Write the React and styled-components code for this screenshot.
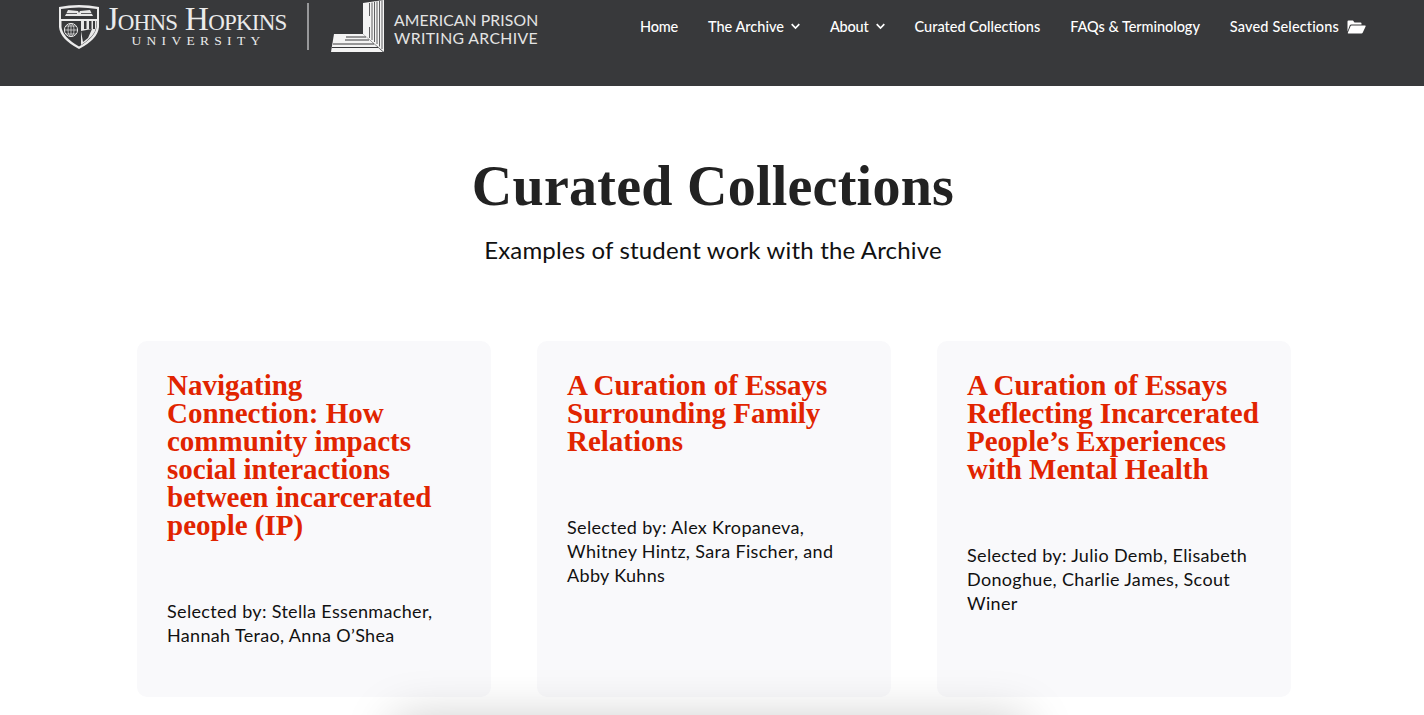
import React from "react";
import styled, { createGlobalStyle } from "styled-components";

const Global = createGlobalStyle`
  html, body { margin: 0; padding: 0; height: 715px; overflow: hidden; background: #fff; }
  body { font-family: "Lato", "Liberation Sans", sans-serif; color: #111; }
`;

const Page = styled.div`
  width: 1424px;
  height: 715px;
  overflow: hidden;
  position: relative;
`;

const Header = styled.header`
  height: 86px;
  box-sizing: border-box;
  background: #38393b;
  display: flex;
  justify-content: space-between;
  align-items: flex-start;
  padding: 0 58px;
`;

const Brand = styled.div`
  display: flex;
  align-items: flex-start;
  height: 54px;
`;

const Hopkins = styled.div`
  display: flex;
  align-items: flex-start;
  padding-top: 4px;
  gap: 5px;
`;

const HopkinsWords = styled.div`
  display: flex;
  flex-direction: column;
  align-items: center;
  color: #eaeaea;
  font-family: "Liberation Serif", serif;
  width: 182px;
`;

const HopkinsName = styled.span`
  font-size: 33.5px;
  line-height: 30px;
  font-variant: small-caps;
  white-space: nowrap;
  letter-spacing: -0.8px;
`;

const HopkinsSub = styled.span`
  font-size: 13.5px;
  line-height: 14px;
  letter-spacing: 5.3px;
  margin-right: -5px;
`;

const Divider = styled.div`
  width: 2px;
  height: 47px;
  margin: 3px 22px 0 20px;
  background: #97989a;
`;

const Archive = styled.div`
  display: flex;
  align-items: flex-start;
  gap: 9px;
`;

const ArchiveWords = styled.div`
  margin-top: 11px;
  display: flex;
  flex-direction: column;
`;

const ArchiveLine = styled.span`
  color: #e4e4e4;
  font-family: "Lato", sans-serif;
  font-size: 15.75px;
  line-height: 18px;
  white-space: nowrap;
  letter-spacing: ${(p) => p.$tracking}px;
`;

const Nav = styled.nav`
  display: flex;
  align-items: center;
  gap: 30px;
  height: 53px;
`;

const NavItem = styled.a`
  display: flex;
  align-items: center;
  gap: ${(p) => p.$gap || 7}px;
  color: #fff;
  font-family: "Lato", sans-serif;
  font-size: 14.5px;
  font-weight: 500;
  white-space: nowrap;
  letter-spacing: ${(p) => p.$tracking || 0}px;
`;

const Main = styled.main`
  display: flex;
  flex-direction: column;
  align-items: center;
  padding-left: 2px;
`;

const Title = styled.h1`
  margin: 69px 0 0;
  font-family: "Liberation Serif", serif;
  font-size: 56px;
  line-height: 62px;
  font-weight: 700;
  color: #222;
  letter-spacing: 0.25px;
`;

const Subtitle = styled.p`
  margin: 18px 0 0;
  font-family: "Lato", sans-serif;
  font-size: 24px;
  line-height: 30px;
  color: #111;
  letter-spacing: 0.17px;
`;

const Cards = styled.section`
  display: grid;
  grid-template-columns: repeat(3, 354px);
  column-gap: 46px;
  margin: 76px 0 0 2px;
`;

const Card = styled.article`
  height: 356px;
  box-sizing: border-box;
  background: #f9f9fb;
  border-radius: 10px;
  padding: 30px;
`;

const CardTitle = styled.h2`
  margin: 0 0 60px;
  font-family: "Liberation Serif", serif;
  font-size: 29px;
  line-height: 28px;
  font-weight: 700;
  color: #e12400;
`;

const Selected = styled.p`
  margin: 0;
  font-family: "Lato", sans-serif;
  font-size: 18px;
  line-height: 24px;
  color: #111;
  letter-spacing: 0.33px;
`;

const BottomShadow = styled.div`
  position: absolute;
  left: 405px;
  width: 610px;
  top: 730px;
  height: 60px;
  background: #888;
  box-shadow: 0 0 50px 10px rgba(0, 0, 0, 0.22);
`;

const Shield = () => (
  <svg width="42" height="45" viewBox="0 0 42 45" aria-hidden="true">
    <path d="M1 3 Q21 -1 41 3 L41 23 Q40 35 21 45 Q2 35 1 23 Z" fill="#ececec" />
    <path d="M3 5 Q21 2 39 5 L39 15 L3 15 Z" fill="#38393b" />
    <path d="M7 12 L10 6 L20 7 L21 9 L22 7 L32 6 L35 12 Z" fill="#e8e8e8" />
    <path d="M8 9.5 H19 M23 9.5 H34" stroke="#38393b" strokeWidth="0.8" />
    <path d="M3.5 17 L38.5 17 L38.5 23 Q37.5 33 21 42.5 Q4.5 33 3.5 23 Z" fill="#38393b" />
    <circle cx="13" cy="26" r="6.6" fill="none" stroke="#e8e8e8" strokeWidth="1" />
    <path d="M6.5 26 H19.5 M13 19.5 V32.5 M8 22 H18 M8 30 H18" stroke="#e8e8e8" strokeWidth="0.7" />
    <ellipse cx="13" cy="26" rx="3" ry="6.6" fill="none" stroke="#e8e8e8" strokeWidth="0.7" />
    <path d="M23 17 H38 V24 Q37 32 23 41 Z" fill="#e8e8e8" />
    <path d="M26 17 H28.5 V25 H26 Z M31 17 H33.5 V25 H31 Z M35 17 H37 V25 H35 Z M23 27 L34 25 L30 34 L25 38 Z" fill="#38393b" />
  </svg>
);

const ArchiveMark = () => (
  <svg width="54" height="54" viewBox="0 0 54 54" aria-hidden="true">
    <path d="M53 0 L53 52 L32 34 L32 3 Z" fill="#f4f4f4" />
    <path d="M38.5 3 V16 M38.5 27 V38 M41 2.5 V40 M43.5 2 V42 M46 1.5 V44 M48.5 1 V46.5 M51 0.5 V49" stroke="#38393b" strokeWidth="0.8" />
    <path d="M3 34 H32 L52 52 H0 Z" fill="#f4f4f4" />
    <path d="M15 37 H35 M14 40 H38 M2 44 H43 M1 47.5 H47" stroke="#38393b" strokeWidth="1" />
  </svg>
);

const Chevron = () => (
  <svg width="9" height="7" viewBox="0 0 9 7" aria-hidden="true">
    <path d="M0.7 1.2 L4.5 5 L8.3 1.2" fill="none" stroke="#fff" strokeWidth="1.7" />
  </svg>
);

const FolderOpen = () => (
  <svg width="19" height="14" viewBox="0 0 19 14" aria-hidden="true">
    <path d="M0.5 11.5 V1.5 Q0.5 0.5 1.5 0.5 H6 L7.5 2.5 H13.5 Q14.5 2.5 14.5 3.5 V4.5 H4.2 Q3.2 4.5 2.8 5.3 Z" fill="#fff" />
    <path d="M4.6 5.6 H18 Q19 5.6 18.6 6.6 L15.8 12.4 Q15.4 13.4 14.4 13.4 H1.4 Q0.4 13.4 0.9 12.4 L3.4 6.4 Q3.7 5.6 4.6 5.6 Z" fill="#fff" />
  </svg>
);

const cards = [
  {
    title: "Navigating Connection: How community impacts social interactions between incarcerated people (IP)",
    by: "Selected by: Stella Essenmacher, Hannah Terao, Anna O’Shea",
  },
  {
    title: "A Curation of Essays Surrounding Family Relations",
    by: "Selected by: Alex Kropaneva, Whitney Hintz, Sara Fischer, and Abby Kuhns",
  },
  {
    title: "A Curation of Essays Reflecting Incarcerated People’s Experiences with Mental Health",
    by: "Selected by: Julio Demb, Elisabeth Donoghue, Charlie James, Scout Winer",
  },
];

export default function App() {
  return (
    <Page>
      <Global />
      <Header>
        <Brand>
          <Hopkins>
            <Shield />
            <HopkinsWords>
              <HopkinsName>Johns Hopkins</HopkinsName>
              <HopkinsSub>UNIVERSITY</HopkinsSub>
            </HopkinsWords>
          </Hopkins>
          <Divider />
          <Archive>
            <ArchiveMark />
            <ArchiveWords>
              <ArchiveLine $tracking={0.1}>AMERICAN PRISON</ArchiveLine>
              <ArchiveLine $tracking={0.37}>WRITING ARCHIVE</ArchiveLine>
            </ArchiveWords>
          </Archive>
        </Brand>
        <Nav>
          <NavItem $tracking={-0.2}>Home</NavItem>
          <NavItem>The Archive <Chevron /></NavItem>
          <NavItem $tracking={-0.2}>About <Chevron /></NavItem>
          <NavItem>Curated Collections</NavItem>
          <NavItem $tracking={-0.05}>FAQs &amp; Terminology</NavItem>
          <NavItem $gap={8} $tracking={0.15}>Saved Selections <FolderOpen /></NavItem>
        </Nav>
      </Header>
      <Main>
        <Title>Curated Collections</Title>
        <Subtitle>Examples of student work with the Archive</Subtitle>
        <Cards>
          {cards.map((c) => (
            <Card key={c.title}>
              <CardTitle>{c.title}</CardTitle>
              <Selected>{c.by}</Selected>
            </Card>
          ))}
        </Cards>
      </Main>
      <BottomShadow />
    </Page>
  );
}
